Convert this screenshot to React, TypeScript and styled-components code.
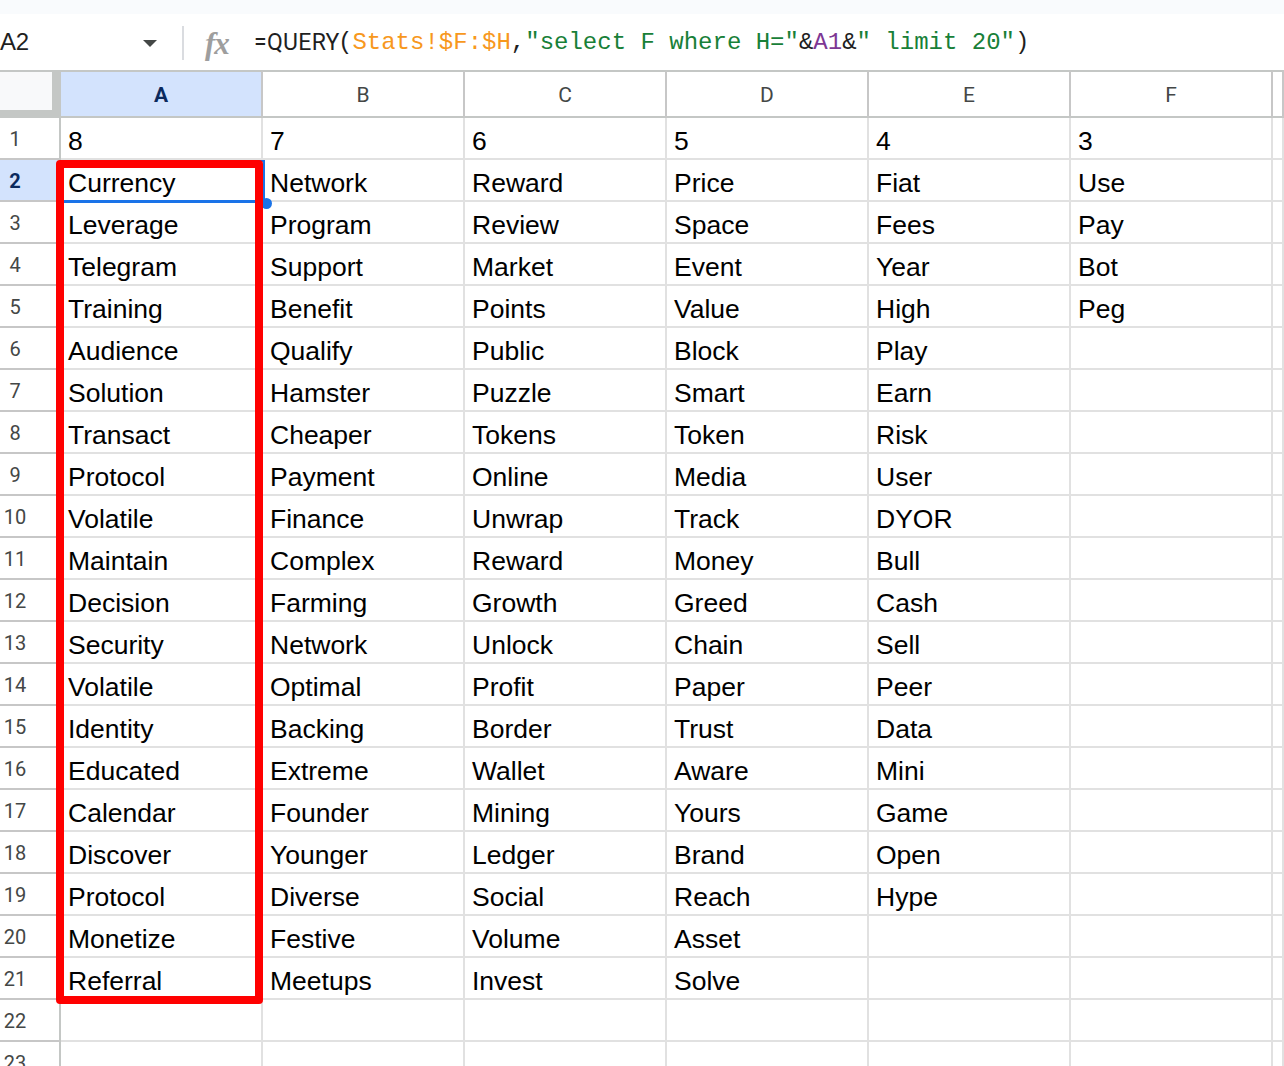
import React from "react";
import styled, { createGlobalStyle } from "styled-components";

const Global = createGlobalStyle`
  html, body { margin: 0; padding: 0; background: #ffffff; overflow: hidden; }
  body { font-family: "Liberation Sans", Arial, sans-serif; }
  * { box-sizing: border-box; }
`;

const Page = styled.div`
  width: 1284px;
  height: 1066px;
  overflow: hidden;
  display: flex;
  flex-direction: column;
`;

const TopStrip = styled.div`
  height: 14px;
  background: #f9fbfd;
  flex: none;
`;

const FormulaBar = styled.div`
  height: 56px;
  flex: none;
  display: flex;
  align-items: center;
  background: #ffffff;
`;

const NameBox = styled.div`
  width: 182px;
  display: flex;
  align-items: center;
  justify-content: space-between;
  padding-right: 25px;
  font-size: 24px;
  color: #1f1f1f;
  letter-spacing: -0.3px;
`;

const Caret = styled.span`
  width: 0;
  height: 0;
  border-left: 7px solid transparent;
  border-right: 7px solid transparent;
  border-top: 7px solid #444746;
  margin-top: 2px;
`;

const Divider = styled.div`
  width: 2px;
  height: 34px;
  background: #dadce0;
  margin-top: 2px;
`;

const Fx = styled.span`
  margin-left: 21px;
  width: 49px;
  font-family: "Liberation Serif", "DejaVu Serif", serif;
  font-style: italic;
  font-weight: 700;
  font-size: 31px;
  color: #9e9e9e;
  letter-spacing: -1px;
  margin-top: 4px;
`;

const Formula = styled.div`
  font-family: "Liberation Mono", "DejaVu Sans Mono", monospace;
  font-size: 24px;
  color: #1f1f1f;
  white-space: pre;
  display: flex;
  align-items: center;
`;

const FuncName = styled.span`
  font-family: Roboto, "Liberation Sans", sans-serif;
  font-size: 23px;
  color: #1f1f1f;
  width: 84px;
  letter-spacing: 0.3px;
`;

const Tok = styled.span<{ $c: string }>`
  color: ${(p) => p.$c};
`;

const Sheet = styled.div`
  position: relative;
  flex: 1;
`;

const Grid = styled.div`
  display: grid;
  grid-template-columns: 61px repeat(6, 202px) 1fr;
  grid-template-rows: 48px;
  grid-auto-rows: 42px;
`;

const Corner = styled.div`
  background: #c4c7c5;
  border-top: 2px solid #c4c7c5;
  padding-right: 9px;
  padding-bottom: 8px;
`;

const CornerInner = styled.div`
  width: 100%;
  height: 100%;
  background: #f8f9fa;
`;

const ColHead = styled.div<{ $active?: boolean }>`
  border-top: 2px solid #c4c7c5;
  border-bottom: 2px solid #c4c7c5;
  border-right: 2px solid #c7c7c7;
  background: ${(p) => (p.$active ? "#d3e3fd" : "#ffffff")};
  color: ${(p) => (p.$active ? "#0b2a5e" : "#444746")};
  font-family: Roboto, "Liberation Sans", sans-serif;
  font-weight: ${(p) => (p.$active ? 700 : 400)};
  font-size: 21px;
  display: flex;
  align-items: center;
  justify-content: center;
  padding-top: 2px;
`;

const RowHead = styled.div<{ $active?: boolean }>`
  border-right: 2px solid #c4c7c5;
  border-bottom: 2px solid #c7c7c7;
  background: ${(p) => (p.$active ? "#d3e3fd" : "#ffffff")};
  color: ${(p) => (p.$active ? "#0b2a5e" : "#444746")};
  font-family: Roboto, "Liberation Sans", sans-serif;
  font-weight: ${(p) => (p.$active ? 700 : 400)};
  font-size: 20px;
  display: flex;
  align-items: center;
  padding-top: 2px;
`;

const RowNum = styled.span`
  width: 30px;
  text-align: center;
`;

const Cell = styled.div`
  border-right: 2px solid #e1e1e1;
  border-bottom: 2px solid #e1e1e1;
  padding-left: 7px;
  padding-top: 6px;
  font-size: 26.5px;
  color: #000000;
  display: flex;
  align-items: center;
  white-space: nowrap;
  overflow: hidden;
`;

const Selection = styled.div`
  position: absolute;
  left: 61px;
  top: 90px;
  width: 204px;
  height: 43px;
  border: 2px solid #1a73e8;
  border-bottom-width: 3px;
`;

const Handle = styled.div`
  position: absolute;
  left: 261px;
  top: 128px;
  width: 11px;
  height: 11px;
  border-radius: 50%;
  background: #1a73e8;
`;

const Highlight = styled.div`
  position: absolute;
  left: 56px;
  top: 90px;
  width: 207px;
  height: 844px;
  border: 8px solid #ff0000;
  border-radius: 4px;
`;

const columns: string[][] = [
  ["8", "Currency", "Leverage", "Telegram", "Training", "Audience", "Solution", "Transact", "Protocol", "Volatile", "Maintain", "Decision", "Security", "Volatile", "Identity", "Educated", "Calendar", "Discover", "Protocol", "Monetize", "Referral"],
  ["7", "Network", "Program", "Support", "Benefit", "Qualify", "Hamster", "Cheaper", "Payment", "Finance", "Complex", "Farming", "Network", "Optimal", "Backing", "Extreme", "Founder", "Younger", "Diverse", "Festive", "Meetups"],
  ["6", "Reward", "Review", "Market", "Points", "Public", "Puzzle", "Tokens", "Online", "Unwrap", "Reward", "Growth", "Unlock", "Profit", "Border", "Wallet", "Mining", "Ledger", "Social", "Volume", "Invest"],
  ["5", "Price", "Space", "Event", "Value", "Block", "Smart", "Token", "Media", "Track", "Money", "Greed", "Chain", "Paper", "Trust", "Aware", "Yours", "Brand", "Reach", "Asset", "Solve"],
  ["4", "Fiat", "Fees", "Year", "High", "Play", "Earn", "Risk", "User", "DYOR", "Bull", "Cash", "Sell", "Peer", "Data", "Mini", "Game", "Open", "Hype"],
  ["3", "Use", "Pay", "Bot", "Peg"],
];

const letters = ["A", "B", "C", "D", "E", "F", ""];
const ROWS = 23;

export default function App() {
  return (
    <Page>
      <Global />
      <TopStrip />
      <FormulaBar>
        <NameBox>
          <span>A2</span>
          <Caret />
        </NameBox>
        <Divider />
        <Fx>fx</Fx>
        <Formula>
          <FuncName>=QUERY</FuncName>
          <Tok $c="#1f1f1f">(</Tok>
          <Tok $c="#f7981d">Stats!$F:$H</Tok>
          <Tok $c="#1f1f1f">,</Tok>
          <Tok $c="#188038">"select F where H="</Tok>
          <Tok $c="#1f1f1f">&amp;</Tok>
          <Tok $c="#7e3794">A1</Tok>
          <Tok $c="#1f1f1f">&amp;</Tok>
          <Tok $c="#188038">" limit 20"</Tok>
          <Tok $c="#1f1f1f">)</Tok>
        </Formula>
      </FormulaBar>
      <Sheet>
        <Grid>
          <Corner>
            <CornerInner />
          </Corner>
          {letters.map((l, i) => (
            <ColHead key={`h${i}`} $active={i === 0}>
              {l}
            </ColHead>
          ))}
          {Array.from({ length: ROWS }).map((_, r) => (
            <React.Fragment key={`r${r}`}>
              <RowHead $active={r === 1}>
                <RowNum>{r + 1}</RowNum>
              </RowHead>
              {letters.map((_, c) => (
                <Cell key={`c${r}-${c}`}>{columns[c]?.[r] ?? ""}</Cell>
              ))}
            </React.Fragment>
          ))}
        </Grid>
        <Selection />
        <Handle />
        <Highlight />
      </Sheet>
    </Page>
  );
}
